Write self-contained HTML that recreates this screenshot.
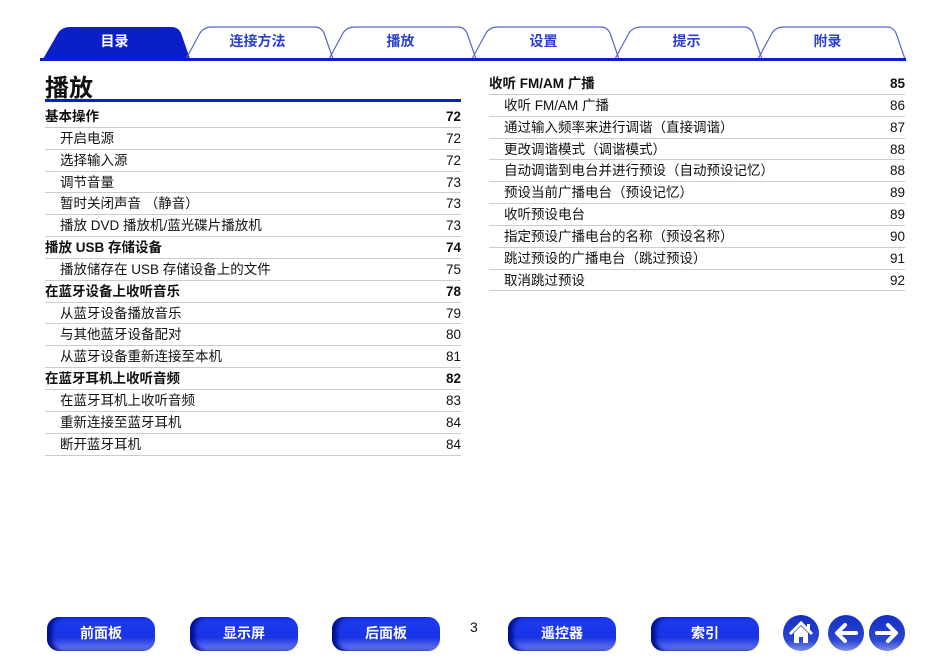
<!DOCTYPE html>
<html><head><meta charset="utf-8"><style>
body{margin:0;width:950px;height:670px;background:#fff;font-family:"Liberation Sans","Noto Sans CJK SC",sans-serif;position:relative;overflow:hidden;color:#111}
.tabs{position:absolute;left:0;top:0}
.tl{position:absolute;top:31px;font-size:14px;font-weight:bold;color:#2a3fd0;width:143px;text-align:center}
.bar{position:absolute;left:40px;top:58px;width:866px;height:3px;background:#0a1fc8}
h1{position:absolute;left:45px;top:68px;margin:0;font-size:24px;font-weight:bold}
.tl2{position:absolute;left:45px;top:99px;width:416px;height:3px;background:#0a1fc8}
.col{position:absolute;width:416px}
.r{height:21.85px;line-height:21px;border-bottom:1px solid #ccc;box-sizing:border-box;font-size:13.5px;position:relative;padding-left:15px}
.r span{position:absolute;right:0;top:0}
.r.h{font-weight:bold;padding-left:0}
.btn{position:absolute;top:617px;width:108px;height:34px;border-radius:12px;background:linear-gradient(#1c3cf0,#1a33e6 60%,#6d7ff0);box-shadow:inset 5px 0 4px #001090;color:#fff;font-weight:bold;font-size:14px;text-align:center;line-height:32px}
.c{position:absolute;top:615px;width:36px;height:36px;border-radius:50%;background:linear-gradient(#1530c0,#2a45d0 70%,#8090e8)}
</style></head><body>
<svg class="tabs" width="950" height="62">
<path d="M43 59 L58 33 Q62 27 70 27 H172 Q178 27 181 33 L190 59 Z" fill="#0a1fc8"/>
<g fill="none" stroke="#5566cc" stroke-width="1.2">
<path d="M186 59 L200 33 Q204 27 212 27 H315 Q321 27 324 33 L333 59"/>
<path d="M329 59 L343 33 Q347 27 355 27 H458 Q464 27 467 33 L476 59"/>
<path d="M472 59 L486 33 Q490 27 498 27 H601 Q607 27 610 33 L619 59"/>
<path d="M615 59 L629 33 Q633 27 641 27 H744 Q750 27 753 33 L762 59"/>
<path d="M758 59 L772 33 Q776 27 784 27 H887 Q893 27 896 33 L905 59"/>
</g></svg>
<div class="tl" style="left:43px;color:#fff">目录</div>
<div class="tl" style="left:186px">连接方法</div>
<div class="tl" style="left:329px">播放</div>
<div class="tl" style="left:472px">设置</div>
<div class="tl" style="left:615px">提示</div>
<div class="tl" style="left:756px">附录</div>
<div class="bar"></div>
<h1>播放</h1>
<div class="tl2"></div>
<div class="col" style="left:45px;top:106px">
<div class="r h">基本操作<span>72</span></div>
<div class="r">开启电源<span>72</span></div>
<div class="r">选择输入源<span>72</span></div>
<div class="r">调节音量<span>73</span></div>
<div class="r">暂时关闭声音 （静音）<span>73</span></div>
<div class="r">播放 DVD 播放机/蓝光碟片播放机<span>73</span></div>
<div class="r h">播放 USB 存储设备<span>74</span></div>
<div class="r">播放储存在 USB 存储设备上的文件<span>75</span></div>
<div class="r h">在蓝牙设备上收听音乐<span>78</span></div>
<div class="r">从蓝牙设备播放音乐<span>79</span></div>
<div class="r">与其他蓝牙设备配对<span>80</span></div>
<div class="r">从蓝牙设备重新连接至本机<span>81</span></div>
<div class="r h">在蓝牙耳机上收听音频<span>82</span></div>
<div class="r">在蓝牙耳机上收听音频<span>83</span></div>
<div class="r">重新连接至蓝牙耳机<span>84</span></div>
<div class="r">断开蓝牙耳机<span>84</span></div>
</div>
<div class="col" style="left:489px;top:73px">
<div class="r h">收听 FM/AM 广播<span>85</span></div>
<div class="r">收听 FM/AM 广播<span>86</span></div>
<div class="r">通过输入频率来进行调谐（直接调谐）<span>87</span></div>
<div class="r">更改调谐模式（调谐模式）<span>88</span></div>
<div class="r">自动调谐到电台并进行预设（自动预设记忆）<span>88</span></div>
<div class="r">预设当前广播电台（预设记忆）<span>89</span></div>
<div class="r">收听预设电台<span>89</span></div>
<div class="r">指定预设广播电台的名称（预设名称）<span>90</span></div>
<div class="r">跳过预设的广播电台（跳过预设）<span>91</span></div>
<div class="r">取消跳过预设<span>92</span></div>
</div>
<div class="btn" style="left:47px">前面板</div>
<div class="btn" style="left:190px">显示屏</div>
<div class="btn" style="left:332px">后面板</div>
<div style="position:absolute;left:470px;top:619px;font-size:14px">3</div>
<div class="btn" style="left:508px">遥控器</div>
<div class="btn" style="left:651px">索引</div>
<div class="c" style="left:783px"><svg width="36" height="36"><path d="M7 19 L18 8 L29 19" fill="none" stroke="#fff" stroke-width="3"/><path d="M11 18 V28 H16 V22 H20 V28 H25 V18 L18 11 Z" fill="#fff"/><rect x="24" y="9" width="3" height="6" fill="#fff"/></svg></div>
<div class="c" style="left:828px"><svg width="36" height="36"><path d="M28 18 H10 M17 10 L9 18 L17 26" fill="none" stroke="#fff" stroke-width="4" stroke-linecap="round" stroke-linejoin="round"/></svg></div>
<div class="c" style="left:869px"><svg width="36" height="36"><path d="M8 18 H26 M19 10 L27 18 L19 26" fill="none" stroke="#fff" stroke-width="4" stroke-linecap="round" stroke-linejoin="round"/></svg></div>
</body></html>
